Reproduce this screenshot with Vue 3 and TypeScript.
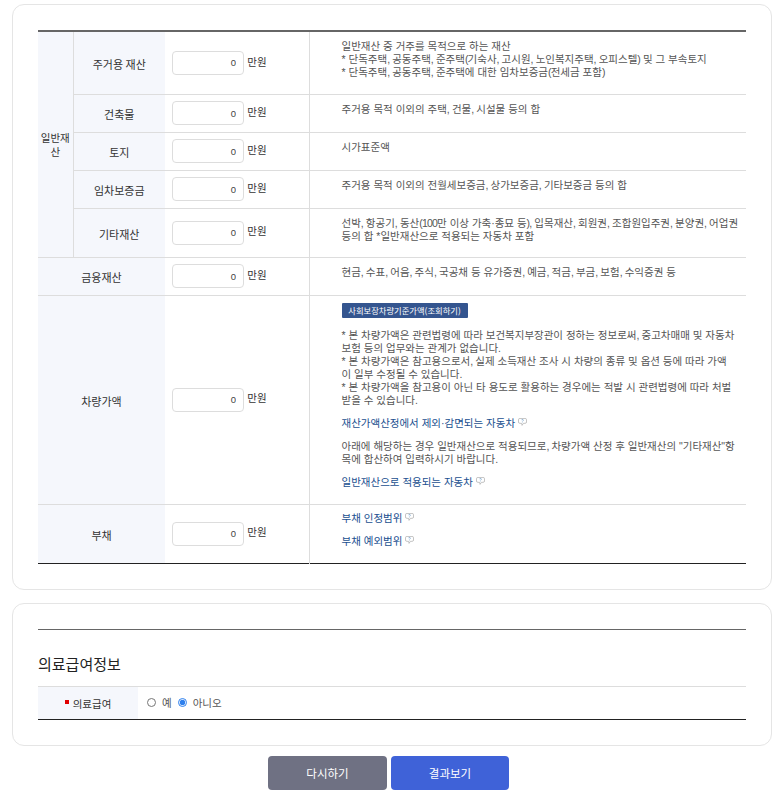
<template>
  <div class="page">
    <section class="card">
      <table class="grid">
        <colgroup>
          <col style="width: 35px" />
          <col style="width: 92px" />
          <col style="width: 144px" />
          <col />
        </colgroup>
        <tbody>
          <tr v-for="(row, i) in generalRows" :key="row.label" :style="{ height: row.height + 'px' }">
            <th v-if="i === 0" rowspan="5" class="group">일반재<br />산</th>
            <th class="sub">{{ row.label }}</th>
            <td class="amount">
              <input class="money" type="text" value="0" /> <span class="unit">만원</span>
            </td>
            <td class="desc">
              <div v-for="line in row.lines" :key="line"><Tight :text="line" /></div>
            </td>
          </tr>
          <tr style="height: 38px">
            <th colspan="2">금융재산</th>
            <td class="amount">
              <input class="money" type="text" value="0" /> <span class="unit">만원</span>
            </td>
            <td class="desc"><Tight text="현금, 수표, 어음, 주식, 국공채 등 유가증권, 예금, 적금, 부금, 보험, 수익증권 등" /></td>
          </tr>
          <tr style="height: 209px">
            <th colspan="2">차량가액</th>
            <td class="amount">
              <input class="money" type="text" value="0" /> <span class="unit">만원</span>
            </td>
            <td class="desc">
              <a class="lookup">사회보장차량기준가액(조회하기)</a>
              <p class="notes">
                <template v-for="line in carNotes" :key="line"><Tight :text="line" /><br /></template>
              </p>
              <p class="link">재산가액산정에서 제외·감면되는 자동차<svg class="help" viewBox="0 0 10 9"><path d="M2 .5h6a1.500 1.500 0 0 1 1.500 1.500v2.500a1.500 1.500 0 0 1-1.500 1.500H6L4.500 8.300 4 6H2A1.500 1.500 0 0 1 .5 4.500V2A1.500 1.500 0 0 1 2 .5z" /><path class="q" d="M4 2.400C4 1.900 4.400 1.700 5 1.700s1 .3 1 .8c0 .7-1 .7-1 1.300M5 4.300v.6" /></svg></p>
              <p><Tight text='아래에 해당하는 경우 일반재산으로 적용되므로, 차량가액 산정 후 일반재산의 "기타재산"항' /><br />목에 합산하여 입력하시기 바랍니다.</p>
              <p class="link">일반재산으로 적용되는 자동차<svg class="help" viewBox="0 0 10 9"><path d="M2 .5h6a1.500 1.500 0 0 1 1.500 1.500v2.500a1.500 1.500 0 0 1-1.500 1.500H6L4.500 8.300 4 6H2A1.500 1.500 0 0 1 .5 4.500V2A1.500 1.500 0 0 1 2 .5z" /><path class="q" d="M4 2.400C4 1.900 4.400 1.700 5 1.700s1 .3 1 .8c0 .7-1 .7-1 1.300M5 4.300v.6" /></svg></p>
            </td>
          </tr>
          <tr class="last" style="height: 59px">
            <th colspan="2">부채</th>
            <td class="amount">
              <input class="money" type="text" value="0" /> <span class="unit">만원</span>
            </td>
            <td class="desc">
              <p class="link first">부채 인정범위<svg class="help" viewBox="0 0 10 9"><path d="M2 .5h6a1.500 1.500 0 0 1 1.500 1.500v2.500a1.500 1.500 0 0 1-1.500 1.500H6L4.500 8.300 4 6H2A1.500 1.500 0 0 1 .5 4.500V2A1.500 1.500 0 0 1 2 .5z" /><path class="q" d="M4 2.400C4 1.900 4.400 1.700 5 1.700s1 .3 1 .8c0 .7-1 .7-1 1.300M5 4.300v.6" /></svg></p>
              <p class="link">부채 예외범위<svg class="help" viewBox="0 0 10 9"><path d="M2 .5h6a1.500 1.500 0 0 1 1.500 1.500v2.500a1.500 1.500 0 0 1-1.500 1.500H6L4.500 8.300 4 6H2A1.500 1.500 0 0 1 .5 4.500V2A1.500 1.500 0 0 1 2 .5z" /><path class="q" d="M4 2.400C4 1.900 4.400 1.700 5 1.700s1 .3 1 .8c0 .7-1 .7-1 1.300M5 4.300v.6" /></svg></p>
            </td>
          </tr>
        </tbody>
      </table>
    </section>

    <section class="card medical">
      <div class="rule"></div>
      <h2>의료급여정보</h2>
      <div class="med-row">
        <div class="med-label"><i class="req"></i>의료급여</div>
        <div class="med-value">
          <label><input type="radio" name="med" />예</label>
          <label><input type="radio" name="med" checked />아니오</label>
        </div>
      </div>
    </section>

    <div class="actions">
      <button class="btn reset" type="button">다시하기</button>
      <button class="btn submit" type="button">결과보기</button>
    </div>
  </div>
</template>

<script setup lang="ts">
import { h } from 'vue'

interface GeneralRow {
  label: string
  height: number
  lines: string[]
}

// commas, brackets and digits run narrower in the reference than in Liberation Sans
const Tight = (props: { text: string }) =>
  props.text.split(/([,()0-9])/).map((part) => (/^[,()0-9]$/.test(part) ? h('span', { class: 'tight' }, part) : part))
Tight.props = ['text']

const generalRows: GeneralRow[] = [
  {
    label: '주거용 재산',
    height: 63,
    lines: [
      '일반재산 중 거주를 목적으로 하는 재산',
      '* 단독주택, 공동주택, 준주택(기숙사, 고시원, 노인복지주택, 오피스텔) 및 그 부속토지',
      '* 단독주택, 공동주택, 준주택에 대한 임차보증금(전세금 포함)',
    ],
  },
  { label: '건축물', height: 38, lines: ['주거용 목적 이외의 주택, 건물, 시설물 등의 합'] },
  { label: '토지', height: 38, lines: ['시가표준액'] },
  { label: '임차보증금', height: 38, lines: ['주거용 목적 이외의 전월세보증금, 상가보증금, 기타보증금 등의 합'] },
  {
    label: '기타재산',
    height: 49,
    lines: [
      '선박, 항공기, 동산(100만 이상 가축·종묘 등), 입목재산, 회원권, 조합원입주권, 분양권, 어업권',
      '등의 합 *일반재산으로 적용되는 자동차 포함',
    ],
  },
]

const carNotes: string[] = [
  '* 본 차량가액은 관련법령에 따라 보건복지부장관이 정하는 정보로써, 중고차매매 및 자동차',
  '보험 등의 업무와는 관계가 없습니다.',
  '* 본 차량가액은 참고용으로서, 실제 소득재산 조사 시 차량의 종류 및 옵션 등에 따라 가액',
  '이 일부 수정될 수 있습니다.',
  '* 본 차량가액을 참고용이 아닌 타 용도로 활용하는 경우에는 적발 시 관련법령에 따라 처벌',
  '받을 수 있습니다.',
]
</script>

<style>
html,
body {
  margin: 0;
  background: #fff;
}
.tight {
  letter-spacing: -0.8px;
}
</style>

<style scoped>
.page {
  padding: 4px 7px 5px 12px;
  font-family: "Noto Sans CJK KR", "Liberation Sans", sans-serif;
  color: #333;
}
.card {
  border: 1px solid #e5e5e5;
  border-radius: 12px;
  padding: 25px;
}
.grid {
  width: 708px;
  table-layout: fixed;
  border-collapse: collapse;
  border-top: 2px solid #666;
  border-bottom: 1px solid #222;
  font-size: 10.500px;
}
.grid tr + tr {
  border-top: 1px solid #ddd;
}
.grid th {
  background: #f5f7fc;
  font-weight: 400;
  font-size: 11px;
  color: #333;
  padding: 2px 0 0;
}
.grid th.group {
  border-right: 1px solid #ddd;
  padding: 2px 0 0;
  font-size: 10.500px;
  line-height: 14px;
}
.amount {
  padding: 0 0 0 7px;
  border-right: 1px solid #ddd;
  white-space: nowrap;
}
.money {
  width: 72px;
  height: 24px;
  box-sizing: border-box;
  border: 1px solid #ddd;
  border-radius: 4px;
  padding: 0 7px;
  text-align: right;
  font: 400 9.500px "Liberation Sans", sans-serif;
  color: #444;
  vertical-align: middle;
}
.unit {
  margin-left: 1px;
  font-size: 10.500px;
}
.desc {
  vertical-align: top;
  padding: 8px 0 8px 32px;
  font-family: "Liberation Sans", "Noto Sans CJK KR", sans-serif;
  font-size: 10.500px;
  line-height: 13px;
  color: #555;
  white-space: nowrap;
}
.desc p {
  margin: 10px 0 0;
}
.desc p.first {
  margin-top: -1px;
}
.lookup {
  display: block;
  width: 126px;
  margin-top: -1px;
  box-sizing: border-box;
  background: #34558f;
  color: #fff;
  font-family: "Noto Sans CJK KR", sans-serif;
  font-size: 8.300px;
  line-height: 15px;
  text-align: center;
  white-space: nowrap;
  border-radius: 1px;
}
.desc .notes {
  margin-top: 11px;
}
.desc .link {
  color: #1a4f8f;
}
.help {
  width: 9px;
  height: 8px;
  margin-left: 3px;
  vertical-align: 1px;
  fill: none;
  stroke: #a0a0a0;
  stroke-width: 0.700;
}
.help .q {
  stroke: #5b8fc0;
}
.medical {
  margin-top: 13px;
}
.rule {
  border-top: 1px solid #666;
}
h2 {
  margin: 24px 0 12px;
  font-size: 15px;
  line-height: 20px;
  font-weight: 400;
  color: #222;
}
.med-row {
  display: flex;
  height: 32px;
  border-top: 1px solid #ddd;
  border-bottom: 1px solid #222;
  font-size: 10.500px;
  color: #555;
}
.med-label {
  width: 100px;
  background: #f5f7fc;
  display: flex;
  align-items: center;
  justify-content: center;
  padding-top: 2px;
  box-sizing: border-box;
  color: #333;
}
.req {
  width: 4px;
  height: 4px;
  background: #e00000;
  margin-right: 4px;
  margin-top: -4px;
}
.med-value {
  display: flex;
  align-items: center;
  padding-left: 9px;
  gap: 6px;
}
.med-value label {
  display: flex;
  align-items: center;
}
.med-value input {
  width: 9px;
  height: 9px;
  margin: 0 6px 0 0;
  accent-color: #2f80ed;
}
.actions {
  display: flex;
  justify-content: center;
  gap: 4px;
  margin-top: 10px;
  padding-right: 7px;
}
.btn {
  width: 119px;
  height: 34px;
  border: 0;
  border-radius: 4px;
  color: #fff;
  font: 400 11.500px "Noto Sans CJK KR", sans-serif;
}
.reset {
  background: #6f7183;
}
.submit {
  width: 118px;
  background: #3f62d8;
}
</style>
